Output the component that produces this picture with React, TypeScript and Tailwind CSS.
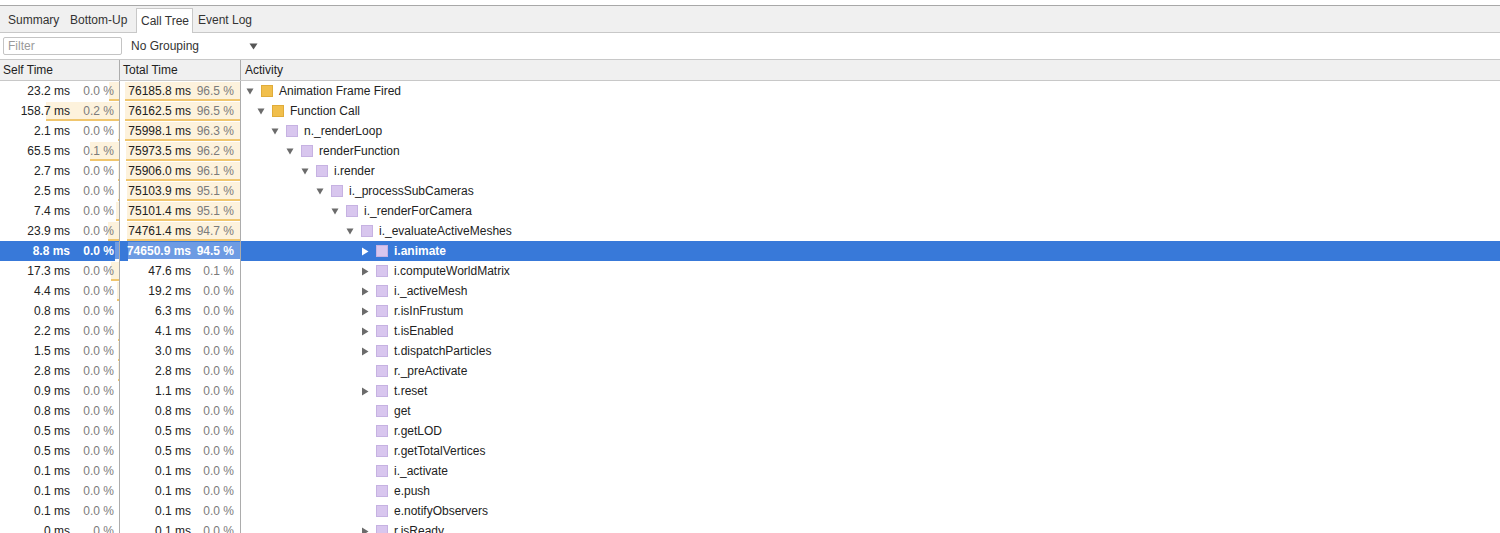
import React from "react";

type Row = {
    self: string;
    selfPct: string;
    selfBar: number;
    total: string;
    totalPct: string;
    totalBar: number;
    level: number;
    arrow: "down" | "right" | null;
    color: "yellow" | "purple";
    name: string;
    selected?: boolean;
};

const rows: Row[] = [
    { self: "23.2 ms", selfPct: "0.0 %", selfBar: 10, total: "76185.8 ms", totalPct: "96.5 %", totalBar: 115, level: 0, arrow: "down", color: "yellow", name: "Animation Frame Fired" },
    { self: "158.7 ms", selfPct: "0.2 %", selfBar: 73, total: "76162.5 ms", totalPct: "96.5 %", totalBar: 115, level: 1, arrow: "down", color: "yellow", name: "Function Call" },
    { self: "2.1 ms", selfPct: "0.0 %", selfBar: 1, total: "75998.1 ms", totalPct: "96.3 %", totalBar: 115, level: 2, arrow: "down", color: "purple", name: "n._renderLoop" },
    { self: "65.5 ms", selfPct: "0.1 %", selfBar: 29, total: "75973.5 ms", totalPct: "96.2 %", totalBar: 114, level: 3, arrow: "down", color: "purple", name: "renderFunction" },
    { self: "2.7 ms", selfPct: "0.0 %", selfBar: 1, total: "75906.0 ms", totalPct: "96.1 %", totalBar: 114, level: 4, arrow: "down", color: "purple", name: "i.render" },
    { self: "2.5 ms", selfPct: "0.0 %", selfBar: 1, total: "75103.9 ms", totalPct: "95.1 %", totalBar: 113, level: 5, arrow: "down", color: "purple", name: "i._processSubCameras" },
    { self: "7.4 ms", selfPct: "0.0 %", selfBar: 3, total: "75101.4 ms", totalPct: "95.1 %", totalBar: 113, level: 6, arrow: "down", color: "purple", name: "i._renderForCamera" },
    { self: "23.9 ms", selfPct: "0.0 %", selfBar: 11, total: "74761.4 ms", totalPct: "94.7 %", totalBar: 113, level: 7, arrow: "down", color: "purple", name: "i._evaluateActiveMeshes" },
    { self: "8.8 ms", selfPct: "0.0 %", selfBar: 4, total: "74650.9 ms", totalPct: "94.5 %", totalBar: 112, level: 8, arrow: "right", color: "purple", name: "i.animate", selected: true },
    { self: "17.3 ms", selfPct: "0.0 %", selfBar: 8, total: "47.6 ms", totalPct: "0.1 %", totalBar: 0, level: 8, arrow: "right", color: "purple", name: "i.computeWorldMatrix" },
    { self: "4.4 ms", selfPct: "0.0 %", selfBar: 2, total: "19.2 ms", totalPct: "0.0 %", totalBar: 0, level: 8, arrow: "right", color: "purple", name: "i._activeMesh" },
    { self: "0.8 ms", selfPct: "0.0 %", selfBar: 0, total: "6.3 ms", totalPct: "0.0 %", totalBar: 0, level: 8, arrow: "right", color: "purple", name: "r.isInFrustum" },
    { self: "2.2 ms", selfPct: "0.0 %", selfBar: 1, total: "4.1 ms", totalPct: "0.0 %", totalBar: 0, level: 8, arrow: "right", color: "purple", name: "t.isEnabled" },
    { self: "1.5 ms", selfPct: "0.0 %", selfBar: 1, total: "3.0 ms", totalPct: "0.0 %", totalBar: 0, level: 8, arrow: "right", color: "purple", name: "t.dispatchParticles" },
    { self: "2.8 ms", selfPct: "0.0 %", selfBar: 1, total: "2.8 ms", totalPct: "0.0 %", totalBar: 0, level: 8, arrow: null, color: "purple", name: "r._preActivate" },
    { self: "0.9 ms", selfPct: "0.0 %", selfBar: 0, total: "1.1 ms", totalPct: "0.0 %", totalBar: 0, level: 8, arrow: "right", color: "purple", name: "t.reset" },
    { self: "0.8 ms", selfPct: "0.0 %", selfBar: 0, total: "0.8 ms", totalPct: "0.0 %", totalBar: 0, level: 8, arrow: null, color: "purple", name: "get" },
    { self: "0.5 ms", selfPct: "0.0 %", selfBar: 0, total: "0.5 ms", totalPct: "0.0 %", totalBar: 0, level: 8, arrow: null, color: "purple", name: "r.getLOD" },
    { self: "0.5 ms", selfPct: "0.0 %", selfBar: 0, total: "0.5 ms", totalPct: "0.0 %", totalBar: 0, level: 8, arrow: null, color: "purple", name: "r.getTotalVertices" },
    { self: "0.1 ms", selfPct: "0.0 %", selfBar: 0, total: "0.1 ms", totalPct: "0.0 %", totalBar: 0, level: 8, arrow: null, color: "purple", name: "i._activate" },
    { self: "0.1 ms", selfPct: "0.0 %", selfBar: 0, total: "0.1 ms", totalPct: "0.0 %", totalBar: 0, level: 8, arrow: null, color: "purple", name: "e.push" },
    { self: "0.1 ms", selfPct: "0.0 %", selfBar: 0, total: "0.1 ms", totalPct: "0.0 %", totalBar: 0, level: 8, arrow: null, color: "purple", name: "e.notifyObservers" },
    { self: "0 ms", selfPct: "0 %", selfBar: 0, total: "0.1 ms", totalPct: "0.0 %", totalBar: 0, level: 8, arrow: "right", color: "purple", name: "r.isReady" },
];

// left offset of the coloured square inside the activity column, per depth
const indent = [20, 31, 45, 60, 75, 90, 105, 120, 135];

const tabs = [
    { label: "Summary", w: "w-[62px]" },
    { label: "Bottom-Up", w: "w-[71px]" },
    { label: "Call Tree", w: "w-[57px]" },
    { label: "Event Log", w: "w-[70px]" },
];

function Arrow({ dir, white }: { dir: "down" | "right"; white?: boolean }) {
    const fill = white ? "#ffffff" : "#6b6b6b";
    if (dir === "down") {
        return (
            <svg width="8" height="7" viewBox="0 0 8 7">
                <polygon points="0.5,0.5 7.5,0.5 4,6.5" fill={fill} />
            </svg>
        );
    }
    return (
        <svg width="8" height="9" viewBox="0 0 8 9">
            <polygon points="1,0.5 7.5,4.5 1,8.5" fill={fill} />
        </svg>
    );
}

function TimeCell({ ms, pct, bar, width, pctBox, selected }: { ms: string; pct: string; bar: number; width: string; pctBox: string; selected?: boolean }) {
    return (
        <div className={`relative h-full shrink-0 border-r border-[#acacac] ${width}`}>
            {bar > 0 && (
                <div
                    className={`absolute right-0 top-px bottom-0 border-b-2 ${selected ? "bg-[#6d9be3] border-white" : "bg-[#fdf2dc] border-[#f0c66e]"}`}
                    style={{ width: bar }}
                />
            )}
            <div className="relative flex h-full items-center justify-end">
                <span className={selected ? "text-white font-semibold" : "text-[#222]"}>{ms}</span>
                <span className={`text-right ${pctBox} ${selected ? "text-white font-semibold" : "text-[#7b7b7b]"}`}>{pct}</span>
            </div>
        </div>
    );
}

export default function App() {
    return (
        <div className="w-[1500px] h-[533px] overflow-hidden bg-white font-['Liberation_Sans',Arial,sans-serif] text-[12px] text-[#222]">
            <div className="h-[5px]" />

            <div className="flex h-[28px] items-end border-y border-[#a8a8a8] border-b-[#c8c8c8] bg-[#f0f0f0] pl-[3px]">
                {tabs.map((t) => (
                    <div
                        key={t.label}
                        className={`flex shrink-0 items-center ${t.w} ${t.label === "Call Tree" ? "h-[25px] mb-[-1px] border-x border-t border-[#c8c8c8] bg-white pl-[4px]" : "h-[24px] pl-[5px]"}`}
                    >
                        <span className="text-[#333]">{t.label}</span>
                    </div>
                ))}
            </div>

            <div className="flex h-[27px] items-center border-b border-[#c8c8c8] bg-white">
                <div className="ml-[3px] flex h-[18px] w-[119px] items-center rounded-[2px] border border-[#c4c4c4] pl-[4px] text-[#9a9a9a]">
                    Filter
                </div>
                <span className="ml-[9px] text-[#333]">No Grouping</span>
                <svg className="ml-[50px]" width="9" height="7" viewBox="0 0 9 7">
                    <polygon points="0.5,0.5 8.5,0.5 4.5,6.5" fill="#555" />
                </svg>
            </div>

            <div className="flex h-[21px] border-b border-[#c8c8c8] bg-[#f0f0f0]">
                <div className="flex w-[120px] shrink-0 items-center border-r border-[#acacac] pl-[3px]">Self Time</div>
                <div className="flex w-[121px] shrink-0 items-center border-r border-[#acacac] pl-[3px]">Total Time</div>
                <div className="flex items-center pl-[4px]">Activity</div>
            </div>

            <div>
                {rows.map((r, i) => (
                    <div key={i} className={`flex h-[20px] ${r.selected ? "bg-[#3879d9]" : ""}`}>
                        <TimeCell ms={r.self} pct={r.selfPct} bar={r.selfBar} width="w-[120px]" pctBox="w-[49px] pr-[5px]" selected={r.selected} />
                        <TimeCell ms={r.total} pct={r.totalPct} bar={r.totalBar} width="w-[121px]" pctBox="w-[49px] pr-[6px]" selected={r.selected} />
                        <div className="flex h-full items-center" style={{ paddingLeft: indent[r.level] - 15 }}>
                            <div className="flex w-[15px] items-center">
                                {r.arrow && <Arrow dir={r.arrow} white={r.selected} />}
                            </div>
                            <div
                                className={`h-[12px] w-[12px] shrink-0 border ${r.color === "yellow" ? "bg-[#f1bf4c] border-[#e0ac3a]" : "bg-[#d8c6ee] border-[#c6b2e2]"}`}
                            />
                            <span className={`ml-[6px] ${r.selected ? "text-white font-semibold" : "text-[#222]"}`}>{r.name}</span>
                        </div>
                    </div>
                ))}
            </div>
        </div>
    );
}
